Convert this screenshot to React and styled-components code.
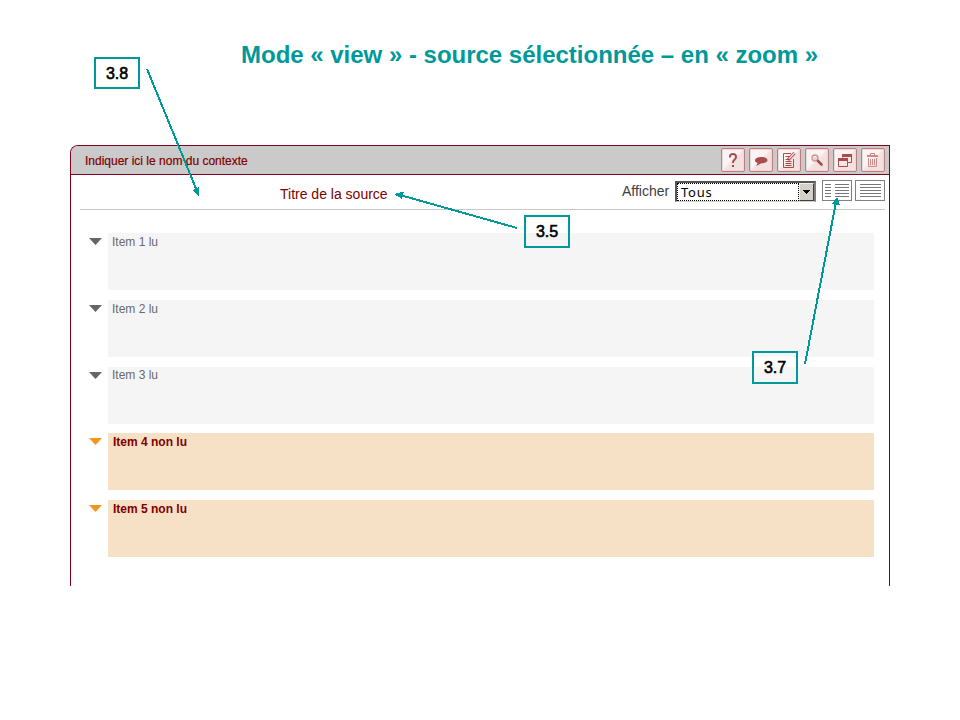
import React from "react";
import styled, { createGlobalStyle } from "styled-components";

const TEAL = "#009999";
const WINE = "#800020";

const GlobalStyle = createGlobalStyle`
  * { box-sizing: border-box; }
  body { margin: 0; background: #fff; font-family: "Liberation Sans", Arial, sans-serif; }
`;

const Slide = styled.main`
  position: relative;
  width: 960px;
  height: 720px;
  overflow: hidden;
  background: #fff;
`;

const Heading = styled.h1`
  margin: 0;
  height: 145px;
  padding: 41px 0 0 241px;
  font-size: 24px;
  line-height: 28px;
  font-weight: bold;
  letter-spacing: -0.01px;
  white-space: nowrap;
  color: ${TEAL};
`;

const Panel = styled.section`
  width: 820px;
  height: 441px;
  margin-left: 70px;
  border: 1px solid ${WINE};
  border-bottom: 0;
  border-top-left-radius: 8px;
  overflow: hidden;
`;

const Header = styled.header`
  display: flex;
  align-items: center;
  justify-content: space-between;
  height: 29px;
  padding: 0 4px 0 14px;
  background: #cacaca;
  border-bottom: 1px solid ${WINE};
`;

const ContextName = styled.span`
  padding-top: 2px;
  font-size: 12px;
  line-height: 16px;
  color: #800000;
  -webkit-text-stroke: 0.2px #800000;
`;

const Actions = styled.div`
  display: flex;
  gap: 4px;
`;

const ActionButton = styled.button`
  width: 24px;
  height: 24px;
  padding: 0;
  border: 1px solid #c27c7c;
  border-radius: 2px;
  background: linear-gradient(135deg, #fcf3f3 0 45%, #f1e1e0 55% 100%);
  box-shadow: inset 0 0 0 1px #f0d8d8;
  svg { display: block; }
`;

const SourceBar = styled.div`
  display: flex;
  align-items: flex-start;
  height: 35px;
  margin: 0 4px 0 9px;
  padding-top: 5px;
  border-bottom: 1px solid #c9c9c9;
`;

const SourceTitle = styled.h2`
  margin: 6px 0 0 200px;
  width: 342px;
  font-size: 14px;
  line-height: 16px;
  font-weight: normal;
  color: #800000;
`;

const FilterLabel = styled.label`
  width: 53px;
  margin-top: 3px;
  font-size: 14px;
  line-height: 16px;
  color: #404040;
`;

const Select = styled.div`
  display: flex;
  width: 141px;
  height: 21px;
  margin-top: 1px;
  border: 2px solid #555;
  border-right-color: #808080;
  border-bottom: 1px solid #d4d0c8;
  background: #fff;
`;

const SelectValue = styled.span`
  flex: 1;
  padding-left: 3px;
  border: 1px dotted #000;
  font-family: "Noto Sans", sans-serif;
  font-size: 13px;
  letter-spacing: 0.8px;
  line-height: 16px;
  color: #000;
`;

const SelectArrow = styled.span`
  display: flex;
  align-items: center;
  justify-content: center;
  width: 15px;
  background: #d4d0c8;
  border: 1px solid #404040;
  border-top-color: #eee;
  border-left-color: #eee;
`;

const Views = styled.div`
  display: flex;
  gap: 3px;
  margin-left: 6px;
  svg { display: block; }
`;

const ItemList = styled.ul`
  display: flex;
  flex-direction: column;
  gap: 9.75px;
  margin: 0;
  padding: 23.2px 15px 0 18px;
  list-style: none;
`;

const Item = styled.li`
  display: flex;
  gap: 6px;
  height: 57px;
  color: ${(p) => (p.$unread ? "#f7941d" : "#666")};
  svg { display: block; margin-top: 5px; }
`;

const ItemBody = styled.div`
  flex: 1;
  padding: ${(p) => (p.$unread ? "1.8px 5px" : "1.8px 4px")};
  font-size: 12px;
  line-height: 14px;
  font-weight: ${(p) => (p.$unread ? "bold" : "normal")};
  color: ${(p) => (p.$unread ? "#800000" : "#6a6a6a")};
  background: ${(p) => (p.$unread ? "#f6e0c6" : "#f5f5f5")};
`;

const Callout = styled.div`
  position: absolute;
  left: ${(p) => p.$x}px;
  top: ${(p) => p.$y}px;
  width: 46px;
  height: ${(p) => p.$h || 33}px;
  padding-top: 1px;
  border: 2px solid ${TEAL};
  font-size: 16px;
  line-height: 28px;
  text-align: center;
  color: #000;
  -webkit-text-stroke: 0.6px #000;
`;

const Arrows = styled.svg`
  position: absolute;
  inset: 0;
  pointer-events: none;
`;

const RED = "#a94c4c";

const icons = {
  Aide: (
    <path d="M8 8.5V7.3Q8.3 5 11 5Q14 5 14 8Q14 9.4 12.5 10.7Q11 11.7 11 14M11 16V18" fill="none" stroke={RED} strokeWidth="2" />
  ),
  Commentaire: (
    <path d="M5 11.5C5 9.4 7.8 8 11.3 8S17.5 9.4 17.5 11.2S14.8 14.2 11.5 14.3L6 17L7.8 14C6 13.5 5 12.6 5 11.5Z" fill={RED} />
  ),
  Modifier: (
    <g fill="none" stroke={RED}>
      <path d="M13 4.5H5.5V18.5H15.5V10M7.5 7.5H12M7.5 10.5H10M7.5 12.5H13.5M7.5 14.5H13.5M7.5 16.5H13.5" />
      <path d="M10 11L16.5 4" strokeWidth="3.2" />
      <path d="M11 9.8L16.5 4" stroke="#f6dede" strokeWidth="1.3" />
    </g>
  ),
  Rechercher: (
    <g fill="none">
      <circle cx="9" cy="9" r="3" fill="#edd3d3" stroke="#cc9494" strokeWidth="1.3" />
      <path d="M7.5 8.2Q8.5 7 10 7.6" stroke="#fff" />
      <path d="M12 12L15.5 15.5" stroke={RED} strokeWidth="2.6" strokeLinecap="round" />
    </g>
  ),
  Fenetres: (
    <g>
      <path d="M8.5 5.5H17.5V13.5H8.5Z" fill="#f6e6e6" stroke={RED} />
      <path d="M8 5H18V8H8Z" fill={RED} />
      <path d="M4.5 9.5H13.5V17.5H4.5Z" fill="#f6e6e6" stroke={RED} />
      <path d="M4 9H14V12H4Z" fill={RED} />
      <path d="M8.5 8.500H14.500V13" fill="none" stroke="#f6e6e6" />
    </g>
  ),
  Supprimer: (
    <g fill="none" stroke="#ca8b8b">
      <path d="M5 7H16" strokeWidth="2" />
      <path d="M8.5 6V4.5H12.5V6M6.5 9V17.5H14.5V9" />
      <path d="M8.5 10V16M10.5 10V16M12.5 10V16" />
    </g>
  ),
};

function ViewIcon({ split }) {
  const rows = [4.5, 7.5, 10.5, 13.5, 16.5];
  const d = split
    ? rows.map((y) => `M3 ${y}H9M13 ${y}H27`).join("")
    : rows.map((y) => `M5 ${y}H26`).join("");
  return (
    <svg width="30" height="21">
      <rect x="0.5" y="0.5" width="29" height="20" fill="#fff" stroke="#808080" />
      <path d={d} stroke="#777" />
    </svg>
  );
}

const items = [
  { label: "Item 1 lu" },
  { label: "Item 2 lu" },
  { label: "Item 3 lu" },
  { label: "Item 4 non lu", unread: true },
  { label: "Item 5 non lu", unread: true },
];

export default function App() {
  return (
    <Slide>
      <GlobalStyle />
      <Heading>Mode « view » - source sélectionnée – en « zoom »</Heading>
      <Panel>
        <Header>
          <ContextName>Indiquer ici le nom du contexte</ContextName>
          <Actions>
            {Object.entries(icons).map(([name, icon]) => (
              <ActionButton key={name} aria-label={name}>
                <svg width="22" height="22">{icon}</svg>
              </ActionButton>
            ))}
          </Actions>
        </Header>
        <SourceBar>
          <SourceTitle>Titre de la source</SourceTitle>
          <FilterLabel>Afficher</FilterLabel>
          <Select>
            <SelectValue>Tous</SelectValue>
            <SelectArrow>
              <svg width="7" height="4" shapeRendering="crispEdges"><path d="M0 0H7L3.5 4Z" /></svg>
            </SelectArrow>
          </Select>
          <Views>
            <ViewIcon split />
            <ViewIcon />
          </Views>
        </SourceBar>
        <ItemList>
          {items.map(({ label, unread }) => (
            <Item key={label} $unread={unread}>
              <svg width="13" height="7"><path d="M0 0H13L6.5 7Z" fill="currentColor" /></svg>
              <ItemBody $unread={unread}>{label}</ItemBody>
            </Item>
          ))}
        </ItemList>
      </Panel>
      <Arrows width="960" height="720" shapeRendering="crispEdges">
        <g stroke={TEAL} strokeWidth="2">
          <path d="M147 69L197 191" />
          <path d="M517 228L400 195" />
          <path d="M805 364L836 202" />
        </g>
        <g fill={TEAL}>
          <path d="M199 197L192.500 190L199.500 187Z" />
          <path d="M394 194L404 191.500L402 199Z" />
          <path d="M837 197L832 204L840 205Z" />
        </g>
      </Arrows>
      <Callout $x={94} $y={57} $h={32}>3.8</Callout>
      <Callout $x={524} $y={215}>3.5</Callout>
      <Callout $x={752} $y={351}>3.7</Callout>
    </Slide>
  );
}
